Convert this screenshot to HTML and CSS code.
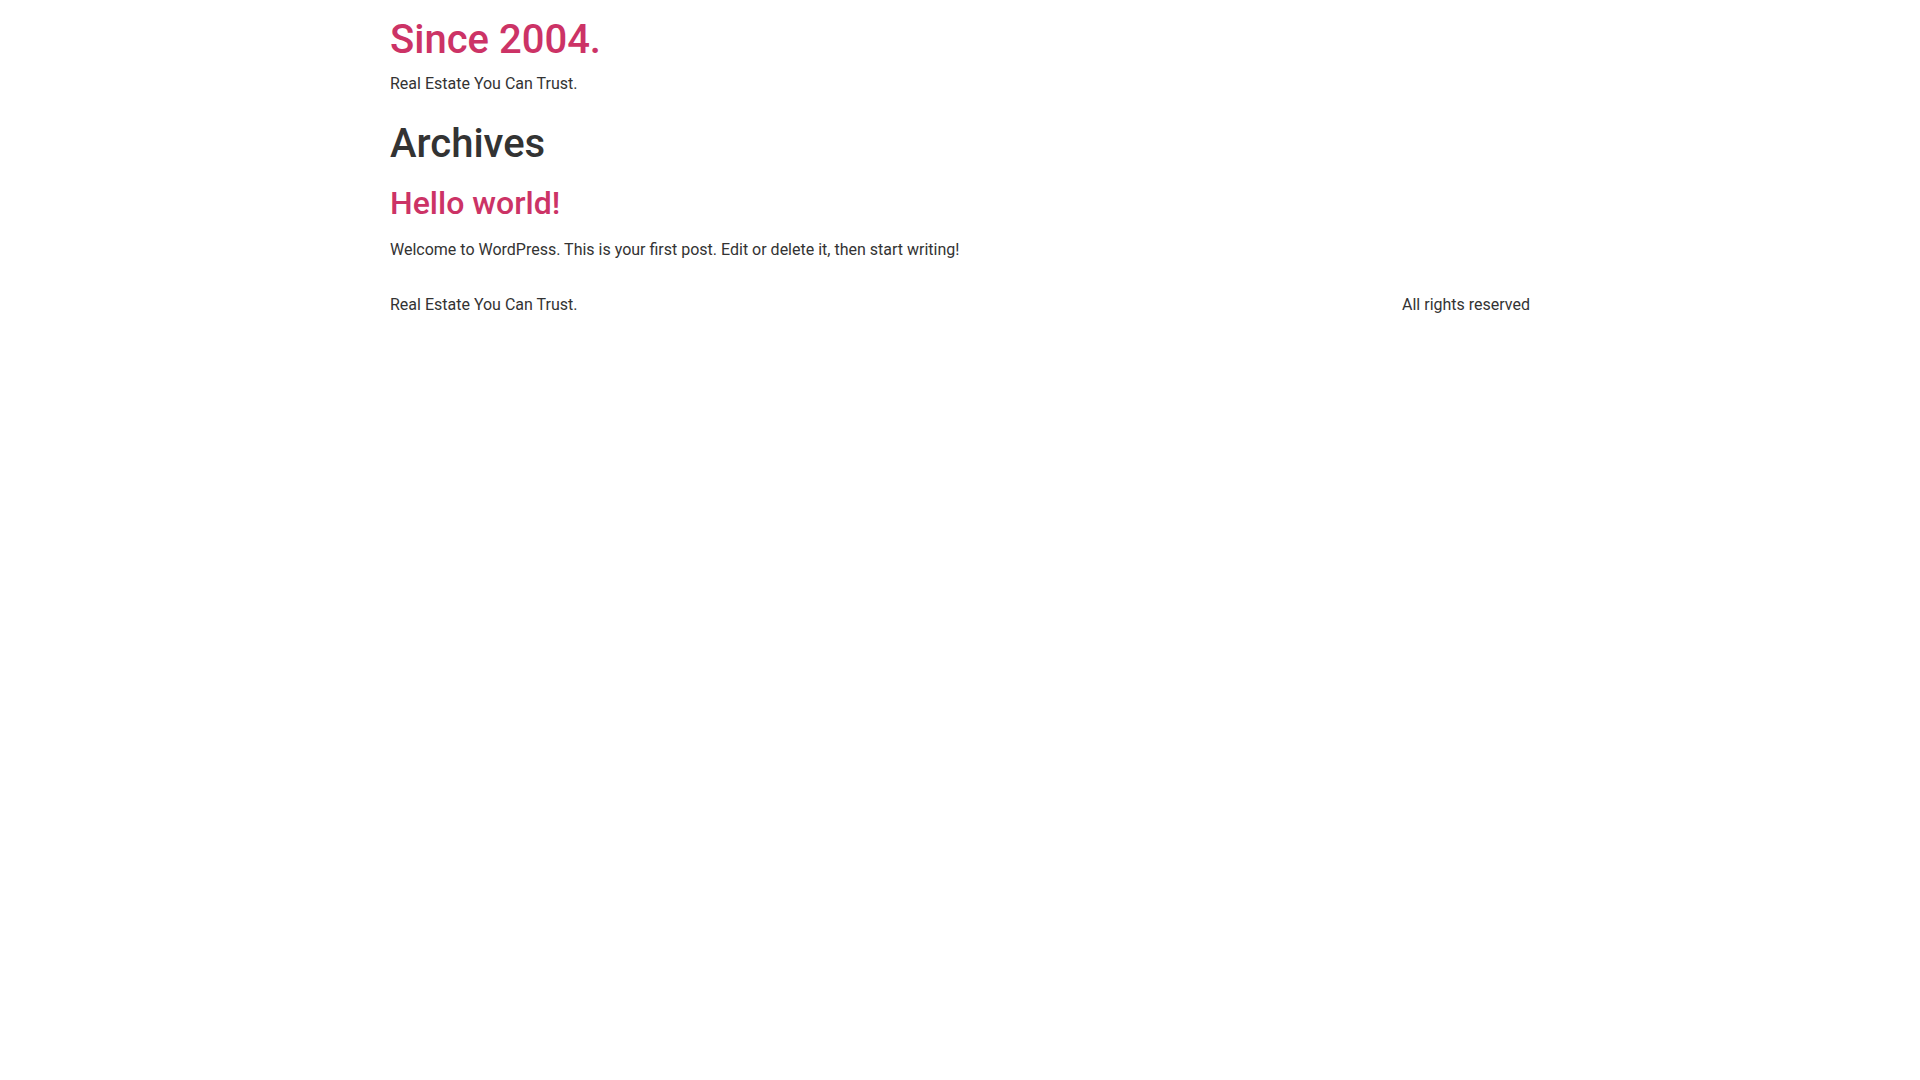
FILE: index.html
```html
<!DOCTYPE html>
<html lang="en">
<head>
<meta charset="utf-8">
<title>Archives</title>
<link rel="stylesheet" href="styles.css">
</head>
<body>
<header class="site-header">
  <div class="site-branding">
    <h1 class="site-title"><a href="#">Since 2004.</a></h1>
    <p class="site-description">Real Estate You Can Trust.</p>
  </div>
</header>
<main class="site-main">
  <div class="page-header">
    <h1 class="entry-title">Archives</h1>
  </div>
  <div class="page-content">
    <article class="post">
      <h2 class="entry-title"><a href="#">Hello world!</a></h2>
      <p>Welcome to WordPress. This is your first post. Edit or delete it, then start writing!</p>
    </article>
  </div>
</main>
<footer class="site-footer">
  <div class="footer-inner">
    <p class="site-description">Real Estate You Can Trust.</p>
    <div class="copyright"><p>All rights reserved</p></div>
  </div>
</footer>
</body>
</html>
```

FILE: styles.css
```css
html { line-height: 1.15; }
body {
  margin: 0;
  font-family: Roboto, "Liberation Sans", sans-serif;
  font-size: 16px;
  font-weight: 400;
  line-height: 1.5;
  color: #333;
  background: #fff;
}
a { color: #c36; text-decoration: none; }
h1, h2 {
  margin-top: 0;
  margin-bottom: 8px;
  font-weight: 500;
  line-height: 1.2;
  color: inherit;
}
h1 { font-size: 40px; }
h2 { font-size: 32px; }
p { margin-top: 0; margin-bottom: 14.4px; }

.site-header, .site-main, .site-footer {
  max-width: 1140px;
  margin: 0 auto;
}
.site-header {
  display: flex;
  justify-content: space-between;
  padding: 16px 0;
}
.site-branding {
  display: flex;
  flex-direction: column;
}
.site-title { margin-bottom: 8px; }
.site-header .site-description { margin-bottom: 0; }
.site-main { padding-top: 8px; }
.page-header .entry-title { margin-bottom: 8px; }
.post .entry-title { margin-top: 16px; margin-bottom: 16px; }
.site-footer { padding: 16px 0; }
.footer-inner {
  display: flex;
  justify-content: space-between;
  align-items: center;
}
.footer-inner p { margin: 0; }
```
